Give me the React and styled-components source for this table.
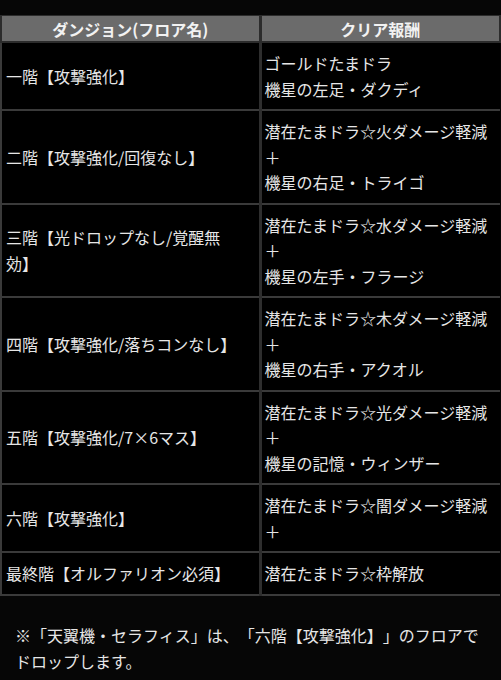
import React from 'react';
import styled, { createGlobalStyle } from 'styled-components';

const rows = [
  { floor: '一階【攻撃強化】', reward: ['ゴールドたまドラ', '機星の左足・ダクディ'] },
  { floor: '二階【攻撃強化/回復なし】', reward: ['潜在たまドラ☆火ダメージ軽減', '＋', '機星の右足・トライゴ'] },
  { floor: '三階【光ドロップなし/覚醒無効】', reward: ['潜在たまドラ☆水ダメージ軽減', '＋', '機星の左手・フラージ'] },
  { floor: '四階【攻撃強化/落ちコンなし】', reward: ['潜在たまドラ☆木ダメージ軽減', '＋', '機星の右手・アクオル'] },
  { floor: '五階【攻撃強化/7×6マス】', reward: ['潜在たまドラ☆光ダメージ軽減', '＋', '機星の記憶・ウィンザー'] },
  { floor: '六階【攻撃強化】', reward: ['潜在たまドラ☆闇ダメージ軽減', '＋'] },
  { floor: '最終階【オルファリオン必須】', reward: ['潜在たまドラ☆枠解放'] },
];

const GlobalStyle = createGlobalStyle`
  html, body {
    margin: 0;
    background: #060606;
  }
  body {
    font-family: "Noto Sans CJK JP", "Noto Sans", sans-serif;
    color: #e6e6e6;
    text-spacing-trim: space-all;
  }
`;

const Page = styled.div`
  width: 501px;
  padding-top: 15px;
`;

const Table = styled.table`
  width: 100%;
  border-collapse: collapse;
  table-layout: fixed;
`;

const HeadCell = styled.th`
  background: #6b6b6b;
  color: #f2f2f2;
  font-size: 16px;
  font-weight: 700;
  line-height: 22px;
  height: 25px;
  padding: 0;
  text-align: center;
  border: 2px solid #2c2c2c;
  border-left-width: ${p => (p.$right ? '3px' : '2px')};
  border-top: 1px solid #2c2c2c;
`;

const Cell = styled.td`
  background: #000;
  font-size: 16px;
  line-height: 25.5px;
  padding: 8px ${p => (p.$right ? '4px' : '14px')} 7px ${p => (p.$right ? '3px' : '4px')};
  vertical-align: middle;
  border: 2px solid #3a3a3a;
  border-left-width: ${p => (p.$right ? '3px' : '2px')};
  border-left-color: ${p => (p.$right ? '#2e2e2e' : '#3a3a3a')};
  border-right: none;
  word-break: break-all;
`;

const Line = styled.div`
  white-space: nowrap;
`;

const Note = styled.p`
  margin: 26px 0 0;
  padding: 0 16px 0 15px;
  font-size: 16px;
  line-height: 26px;
`;

export default function App() {
  return (
    <Page>
      <GlobalStyle />
      <Table>
        <colgroup>
          <col style={{ width: '259px' }} />
          <col />
        </colgroup>
        <thead>
          <tr>
            <HeadCell>ダンジョン(フロア名)</HeadCell>
            <HeadCell $right>クリア報酬</HeadCell>
          </tr>
        </thead>
        <tbody>
          {rows.map(r => (
            <tr key={r.floor}>
              <Cell>{r.floor}</Cell>
              <Cell $right>
                {r.reward.map((t, i) => (
                  <Line key={i}>{t}</Line>
                ))}
              </Cell>
            </tr>
          ))}
        </tbody>
      </Table>
      <Note>※「天翼機・セラフィス」は、「六階【攻撃強化】」のフロアでドロップします。</Note>
    </Page>
  );
}
